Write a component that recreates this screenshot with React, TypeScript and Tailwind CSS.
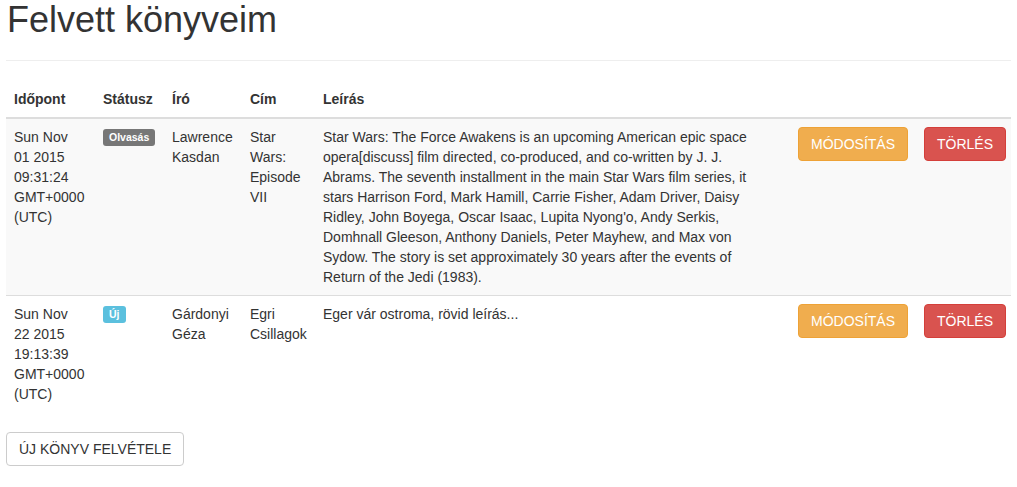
export default function App() {
  const font = { fontFamily: '"Liberation Sans", Arial, Helvetica, sans-serif' };
  const th = "px-2 py-2 text-left align-bottom font-bold border-b-2 border-[#ddd] leading-5";
  const td = "px-2 py-2 align-top border-t border-[#ddd] leading-5";
  const btnWarn =
    "inline-block rounded-[4px] border border-[#eea236] bg-[#f0ad4e] px-3 py-[6px] text-sm leading-5 text-white";
  const btnDanger =
    "inline-block rounded-[4px] border border-[#d43f3a] bg-[#d9534f] px-3 py-[6px] text-sm leading-5 text-white";
  const label =
    "inline-block rounded-[3px] px-[6px] pt-[3px] pb-[3px] align-[1px] text-[10.5px] font-bold leading-[11px] text-white";
  const desc = [
    "Star Wars: The Force Awakens is an upcoming American epic space",
    "opera[discuss] film directed, co-produced, and co-written by J. J.",
    "Abrams. The seventh installment in the main Star Wars film series, it",
    "stars Harrison Ford, Mark Hamill, Carrie Fisher, Adam Driver, Daisy",
    "Ridley, John Boyega, Oscar Isaac, Lupita Nyong'o, Andy Serkis,",
    "Domhnall Gleeson, Anthony Daniels, Peter Mayhew, and Max von",
    "Sydow. The story is set approximately 30 years after the events of",
    "Return of the Jedi (1983).",
  ];
  return (
    <div className="min-h-screen bg-white px-[6px] text-sm text-[#333]" style={font}>
      <h1 className="m-0 pl-[1px] text-[36px] font-medium leading-[1.1] text-[#333]">Felvett könyveim</h1>
      <hr className="mt-5 mb-5 border-0 border-t border-[#eee]" />
      <table className="w-full table-fixed border-collapse">
        <colgroup>
          <col className="w-[89px]" />
          <col className="w-[69px]" />
          <col className="w-[78px]" />
          <col className="w-[73px]" />
          <col className="w-[475px]" />
          <col className="w-[126px]" />
          <col className="w-[95px]" />
        </colgroup>
        <thead>
          <tr>
            <th className={th}>Időpont</th>
            <th className={th}>Státusz</th>
            <th className={th}>Író</th>
            <th className={th}>Cím</th>
            <th className={th}>Leírás</th>
            <th className={th}></th>
            <th className={th}></th>
          </tr>
        </thead>
        <tbody>
          <tr className="bg-[#f9f9f9]">
            <td className={td}>
              Sun Nov<br />01 2015<br />09:31:24<br />GMT+0000<br />(UTC)
            </td>
            <td className={td}>
              <span className={`${label} bg-[#777]`}>Olvasás</span>
            </td>
            <td className={td}>
              Lawrence<br />Kasdan
            </td>
            <td className={td}>
              Star<br />Wars:<br />Episode<br />VII
            </td>
            <td className={td}>
              {desc.map((l, i) => (
                <div key={i} className="whitespace-nowrap">
                  {l}
                </div>
              ))}
            </td>
            <td className={td}>
              <button className={btnWarn}>MÓDOSÍTÁS</button>
            </td>
            <td className={td}>
              <button className={btnDanger}>TÖRLÉS</button>
            </td>
          </tr>
          <tr>
            <td className={td}>
              Sun Nov<br />22 2015<br />19:13:39<br />GMT+0000<br />(UTC)
            </td>
            <td className={td}>
              <span className={`${label} bg-[#5bc0de]`}>Új</span>
            </td>
            <td className={td}>
              Gárdonyi<br />Géza
            </td>
            <td className={td}>
              Egri<br />Csillagok
            </td>
            <td className={td}>Eger vár ostroma, rövid leírás...</td>
            <td className={td}>
              <button className={btnWarn}>MÓDOSÍTÁS</button>
            </td>
            <td className={td}>
              <button className={btnDanger}>TÖRLÉS</button>
            </td>
          </tr>
        </tbody>
      </table>
      <div className="mt-5">
        <button className="inline-block rounded-[4px] border border-[#ccc] bg-white px-3 py-[6px] text-sm leading-5 text-[#333]">
          ÚJ KÖNYV FELVÉTELE
        </button>
      </div>
    </div>
  );
}
